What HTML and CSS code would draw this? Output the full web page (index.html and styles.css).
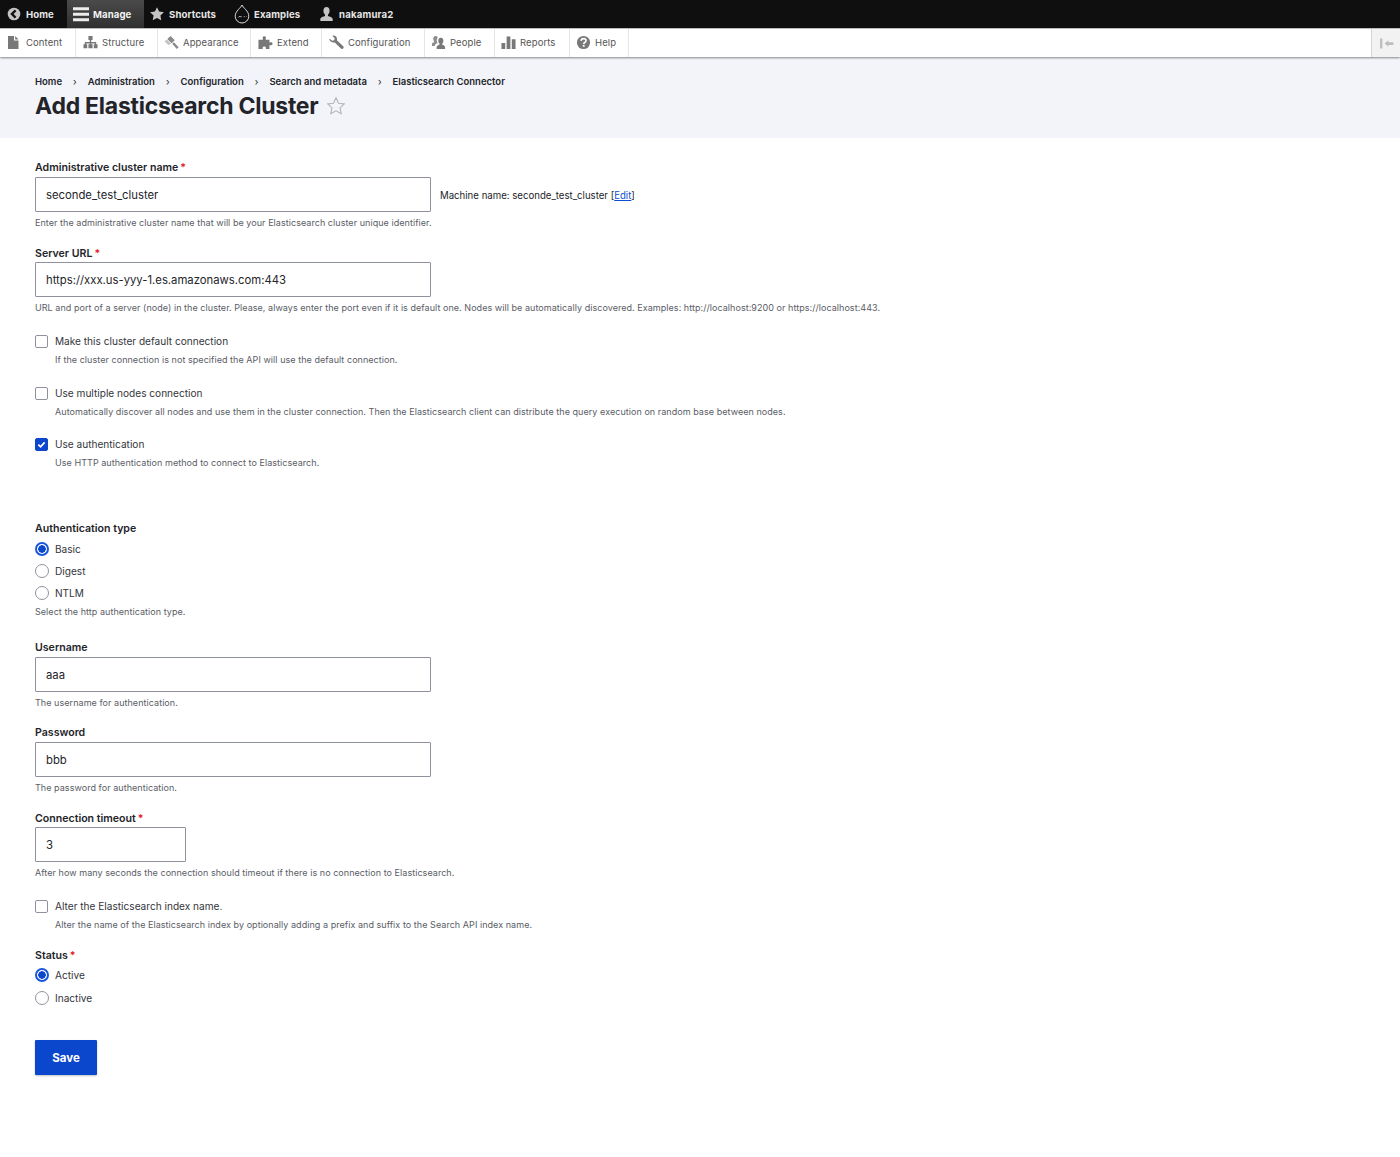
FILE: index.html
```html
<!DOCTYPE html>
<html lang="en">
<head>
<meta charset="utf-8">
<title>Add Elasticsearch Cluster</title>
<link rel="stylesheet" href="styles.css">
</head>
<body>
<nav class="bar">
  <a class="bar-item home"><svg class="bi" viewBox="0 0 16 16"><circle cx="8" cy="8" r="7.200" fill="#c4c4c4"/><path d="M9.800 3.800 5.600 8l4.200 4.200" fill="none" stroke="#0f0f0f" stroke-width="2.600"/></svg>Home</a>
  <a class="bar-item manage"><svg class="bi-m" viewBox="0 0 16 16"><path d="M0 1.200h16v3H0zM0 6.700h16v3H0zM0 12.200h16v3H0z" fill="#ececec"/></svg>Manage</a>
  <a class="bar-item short"><svg class="bi" viewBox="0 0 16 16"><path d="M8 .2l2.400 5 5.500.7-4 3.800 1 5.500L8 12.600l-4.900 2.600 1-5.500-4-3.800 5.500-.7z" fill="#c4c4c4"/></svg>Shortcuts</a>
  <a class="bar-item exam"><svg class="bi-d" viewBox="0 0 16 20"><path d="M8 1c.8 2.600 6.800 6 6.800 11.200A6.800 6.800 0 0 1 8 19a6.800 6.800 0 0 1-6.800-6.800C1.200 7 7.200 3.600 8 1z" fill="none" stroke="#dcdcdc" stroke-width="1"/><path d="M4.400 13.400c1.200-1.800 2-.5 3.200-.6M9.800 12.600h.9M12 12.600h.5" fill="none" stroke="#dcdcdc" stroke-width=".9"/></svg>Examples</a>
  <a class="bar-item user"><svg class="bi-u" viewBox="0 0 16 16"><path d="M8 0c2.200 0 3.300 1.700 3.300 3.900 0 2-.9 3.400-1.700 4.200v1.500c1.500.7 5 1.300 5 3.500V15H1.400v-1.900c0-2.200 3.500-2.800 5-3.500V8.100c-.8-.8-1.700-2.200-1.700-4.200C4.700 1.700 5.800 0 8 0z" fill="#c4c4c4"/></svg>nakamura2</a>
</nav>
<nav class="tray">
  <a class="tray-item w-content"><svg class="ti" viewBox="0 0 13 13"><path d="M1 0h6v4.500h4.500V13H1zM8.200 0l3.300 3.500H8.200z" fill="#787878"/></svg>Content</a>
  <a class="tray-item w-structure"><svg class="ti ti-l" viewBox="0 0 16 16"><path d="M5.800 1h4.400v4.400H8.800v2h5.300v2.400h1.400V14h-4V9.800h1.200V9H8.800v.8h1.400V14H5.800V9.800h1.400V9H3.300v.8h1.200V14h-4V9.800h1.400V7.400h5.300v-2H5.800z" fill="#787878"/></svg>Structure</a>
  <a class="tray-item w-appearance"><svg class="ti ti-l" viewBox="0 0 16 16"><path d="M7 1 11.500 5.500 8 8.800 3.500 4.300z" fill="#8a8a8a"/><path d="M8.800 9.400l1.800-1.600 5 5.200-2 1.800z" fill="#8a8a8a"/><path d="M3 4.800 7.400 9 5 11 .6 6.800z" fill="#c4c4c4"/></svg>Appearance</a>
  <a class="tray-item w-extend"><svg class="ti ti-l" viewBox="0 0 16 16"><path d="M.5 5h4.700V3.800C4.500 3 4.900 1.200 6.700 1.200S8.900 3 8.200 3.800V5h4v3c.9-.7 3.300-.6 3.300 1.300s-2.400 2-3.300 1.300V15H8.200c.6-.9.500-2.800-1.500-2.800s-2.100 1.900-1.500 2.800H.5z" fill="#787878"/></svg>Extend</a>
  <a class="tray-item w-config"><svg class="ti ti-l" viewBox="0 0 16 16"><path d="M.5 3.600 3.300 6.200l2.200-.6.600-2.200L3.500.7C5.800-.1 8.200 1.300 8.500 3.800c.1.800 0 1.300-.1 1.700l6.500 6.100c1.100 1.100.9 2.100.3 2.700s-1.800.9-2.800-.2L6.200 7.900c-.5.100-1.100.2-1.800.1C1.800 7.700 0 5.800.5 3.600z" fill="#787878"/></svg>Configuration</a>
  <a class="tray-item w-people"><svg class="ti ti-l" viewBox="0 0 16 16"><path d="M10.500 3c1.800 0 2.700 1.400 2.700 3.100 0 1.400-.6 2.400-1.200 3v1.300c1.100.5 3 1 3 2.600V15H6v-2c0-1.600 2-2.100 3-2.600V9.100c-.6-.6-1.200-1.600-1.200-3C7.800 4.400 8.700 3 10.500 3z" fill="#787878"/><path d="M5 1c1.300 0 2.100.9 2.200 2.100-.9.700-1.100 2-1 3.300.1.700.3 1.300.6 1.700v.7c-1 .5-2.800 1-2.800 2.900H1V9.500c0-1.200 1.500-1.500 2.300-1.900v-1C2.800 6.100 2.400 5.300 2.400 4 2.400 2.200 3.500 1 5 1z" fill="#8c8c8c"/></svg>People</a>
  <a class="tray-item w-reports"><svg class="ti ti-l" viewBox="0 0 16 16"><path d="M.5 8.500h4V15h-4zM6 1.500h4V15H6zM11.500 4.500h4V15h-4z" fill="#787878"/></svg>Reports</a>
  <a class="tray-item w-help"><svg class="ti ti-l" viewBox="0 0 16 16"><circle cx="8" cy="8" r="7" fill="#787878"/><path d="M5.400 6.300C5.500 4.700 6.700 3.900 8 3.900c1.500 0 2.700.9 2.700 2.200 0 1.900-2.500 1.800-2.500 3.400" fill="none" stroke="#fff" stroke-width="1.700"/><rect x="7.200" y="10.500" width="2" height="2" fill="#fff"/></svg>Help</a>
  <span class="tray-toggle"><svg class="tog" viewBox="0 0 16 12"><path d="M1 .5h2.400v11H1zM6 6l4-3.500V4.500h5.500v3H10v2z" fill="#bdbdbd"/></svg></span>
</nav>
<header class="head">
  <ol class="crumbs">
    <li>Home</li><li>Administration</li><li>Configuration</li><li>Search and metadata</li><li>Elasticsearch Connector</li>
  </ol>
  <h1 class="title">Add Elasticsearch Cluster<svg class="fav" viewBox="0 0 20 20"><path d="M10 1.800l2.500 5.400 5.800.7-4.300 4 1.200 5.800-5.200-2.900-5.200 2.900 1.200-5.800-4.300-4 5.800-.7z" fill="none" stroke="#b5b5b5" stroke-width="1.100"/></svg></h1>
</header>
<main class="form">
  <div class="lbl f-first">Administrative cluster name<span class="req">*</span></div>
  <div class="inline-row">
    <input class="txt" type="text" value="seconde_test_cluster">
    <span class="machine">Machine name: seconde_test_cluster [<a class="edit">Edit</a>]</span>
  </div>
  <p class="desc">Enter the administrative cluster name that will be your Elasticsearch cluster unique identifier.</p>

  <div class="lbl f-next">Server URL<span class="req">*</span></div>
  <input class="txt" type="text" value="https://xxx.us-yyy-1.es.amazonaws.com:443">
  <p class="desc">URL and port of a server (node) in the cluster. Please, always enter the port even if it is default one. Nodes will be automatically discovered. Examples: http://localhost:9200 or https://localhost:443.</p>

  <div class="check c-first"><span class="box"></span>Make this cluster default connection</div>
  <p class="desc sub">If the cluster connection is not specified the API will use the default connection.</p>
  <div class="check c-next"><span class="box"></span>Use multiple nodes connection</div>
  <p class="desc sub">Automatically discover all nodes and use them in the cluster connection. Then the Elasticsearch client can distribute the query execution on random base between nodes.</p>
  <div class="check c-third"><span class="box on"><svg viewBox="0 0 14 14"><path d="M3 7.200 5.800 10 11 4.200" fill="none" stroke="#fff" stroke-width="2.200"/></svg></span>Use authentication</div>
  <p class="desc sub">Use HTTP authentication method to connect to Elasticsearch.</p>

  <div class="lbl f-auth">Authentication type</div>
  <div class="radio r-first"><span class="dot on"></span>Basic</div>
  <div class="radio"><span class="dot"></span>Digest</div>
  <div class="radio"><span class="dot"></span>NTLM</div>
  <p class="desc d-radio">Select the http authentication type.</p>

  <div class="lbl f-user">Username</div>
  <input class="txt" type="text" value="aaa">
  <p class="desc">The username for authentication.</p>

  <div class="lbl f-pass">Password</div>
  <input class="txt" type="text" value="bbb">
  <p class="desc">The password for authentication.</p>

  <div class="lbl f-next">Connection timeout<span class="req">*</span></div>
  <input class="txt short-in" type="text" value="3">
  <p class="desc">After how many seconds the connection should timeout if there is no connection to Elasticsearch.</p>

  <div class="check c-alter"><span class="box"></span>Alter the Elasticsearch index name.</div>
  <p class="desc sub">Alter the name of the Elasticsearch index by optionally adding a prefix and suffix to the Search API index name.</p>

  <div class="lbl f-status">Status<span class="req">*</span></div>
  <div class="radio r-status"><span class="dot on"></span>Active</div>
  <div class="radio r-inactive"><span class="dot"></span>Inactive</div>

  <button class="save" type="button">Save</button>
</main>
</body>
</html>
```
FILE: styles.css
```css
* { box-sizing: border-box; }
html, body { margin: 0; padding: 0; }
body {
  font-family: Inter, "Liberation Sans", sans-serif;
  background: #fff;
  color: #232429;
  min-height: 1157px;
}
.bar {
  display: flex;
  height: 28px;
  background: #0f0f0f;
  color: #e6e6e6;
  font-size: 9.6px;
  font-weight: 700;
  letter-spacing: .1px;
}
.bar-item { display: flex; align-items: center; }
.bi { width: 14px; height: 14px; margin-right: 5px; }
.bi-m { width: 16px; height: 16px; margin-right: 4px; }
.bi-d { width: 16px; height: 20px; margin-right: 4px; }
.bi-u { width: 15px; height: 15px; margin-right: 5px; }
.home { padding-left: 7px; width: 67px; }
.manage { width: 77px; padding-left: 6px; background: linear-gradient(#4a4a4a, #303030); color: #f2f2f2; }
.short { width: 84px; padding-left: 6px; }
.exam { width: 86px; padding-left: 6px; }
.user { padding-left: 5px; letter-spacing: .2px; }
.tray {
  display: flex;
  height: 29px;
  background: #fff;
  border-top: 1px solid #bdbdbd;
  box-shadow: 0 1px 2px rgba(0,0,0,.45);
  position: relative;
  color: #555;
  font-size: 9.5px;
  letter-spacing: .1px;
}
.tray-item {
  display: flex;
  align-items: center;
  padding-bottom: 2px;
  border-right: 1px solid #e6e6e6;
}
.ti { width: 13px; height: 13px; margin: 0 6px 0 7px; }
.ti-l { width: 15px; height: 15px; margin: 0 4px 0 6px; }
.w-content { width: 76px; }
.w-structure { width: 82px; padding-left: 1px; }
.w-appearance { width: 93px; }
.w-extend { width: 71px; padding-left: 1px; }
.w-config { width: 103px; padding-left: 1px; }
.w-people { width: 70px; }
.w-reports { width: 75px; }
.w-help { width: 59px; }
.tray-toggle {
  margin-left: auto;
  width: 29px;
  background: #f2f2f2;
  border-left: 1px solid #d4d4d4;
  display: flex;
  align-items: center;
  justify-content: center;
}
.tog { width: 15px; height: 11px; }
.head {
  height: 81px;
  background: #f2f4f9;
  padding: 19px 35px 0;
}
.crumbs {
  display: flex;
  list-style: none;
  margin: 0;
  padding: 0;
  font-size: 9.5px;
  font-weight: 600;
  line-height: 12px;
}
.crumbs li + li::before {
  content: "\203A";
  padding: 0 11px;
  font-weight: 400;
}
.title {
  display: flex;
  align-items: center;
  margin: 3px 0 0;
  font-size: 23px;
  font-weight: 700;
  line-height: 30px;
  letter-spacing: -.25px;
}
.fav { width: 20px; height: 20px; margin-left: 8px; }
.form { padding: 0 35px; font-size: 10.4px; }
.lbl {
  font-size: 10.6px;
  font-weight: 600;
  line-height: 14px;
}
.req { color: #e3181d; margin-left: 2px; }
.f-first { margin-top: 23px; margin-bottom: 2px; }
.f-next { margin-top: 18px; margin-bottom: 1px; }
.f-pass { margin-top: 17px; margin-bottom: 2px; }
.f-auth { margin-top: 53px; }
.f-user { margin-top: 23px; margin-bottom: 2px; }
.f-status { margin-top: 18px; }
.inline-row { display: flex; align-items: center; }
.txt {
  display: block;
  width: 396px;
  height: 35px;
  padding: 0 10px;
  border: 1px solid #8e929c;
  border-radius: 1px;
  background: #fff;
  font: 400 11.3px Inter, "Liberation Sans", sans-serif;
  color: #232429;
}
.short-in { width: 151px; }
.machine { margin-left: 9px; padding-top: 2px; font-size: 9.65px; color: #232429; }
.edit { color: #0a4fcf; text-decoration: underline; }
.desc {
  margin: 5px 0 0;
  font-size: 9px;
  line-height: 12px;
  color: #5a5d66;
  letter-spacing: .05px;
  white-space: nowrap;
}
.sub { margin: 6px 0 0 20px; }
.check, .radio {
  display: flex;
  align-items: center;
  font-size: 10.1px;
  color: #34353b;
}
.check { height: 13px; line-height: 13px; }
.c-first { margin-top: 21px; }
.c-next { margin-top: 21px; }
.c-third { margin-top: 20px; }
.c-alter { margin-top: 21px; }
.box {
  width: 13px;
  height: 13px;
  margin-right: 7px;
  border: 1px solid #8e929c;
  border-radius: 2px;
  background: #fff;
}
.box.on { background: #0b47cc; border-color: #0b47cc; display: flex; }
.box svg { width: 11px; height: 11px; }
.radio { height: 14px; line-height: 14px; margin-top: 8px; }
.r-first { margin-top: 6px; }
.r-status { margin-top: 5px; }
.r-inactive { margin-top: 9px; }
.dot {
  width: 14px;
  height: 14px;
  margin-right: 6px;
  border: 1px solid #8e929c;
  border-radius: 50%;
  background: #fff;
}
.dot.on { border: 2px solid #1a56db; background: radial-gradient(circle, #0b47cc 0 3.5px, #fff 4px); }
.d-radio { margin-top: 6px; }
.save {
  display: block;
  width: 62px;
  height: 35px;
  margin-top: 35px;
  border: 0;
  border-radius: 1px;
  background: #0b47cc;
  box-shadow: 0 1px 2px rgba(0,0,0,.25);
  color: #fff;
  font: 700 11.5px Inter, "Liberation Sans", sans-serif;
}
```
